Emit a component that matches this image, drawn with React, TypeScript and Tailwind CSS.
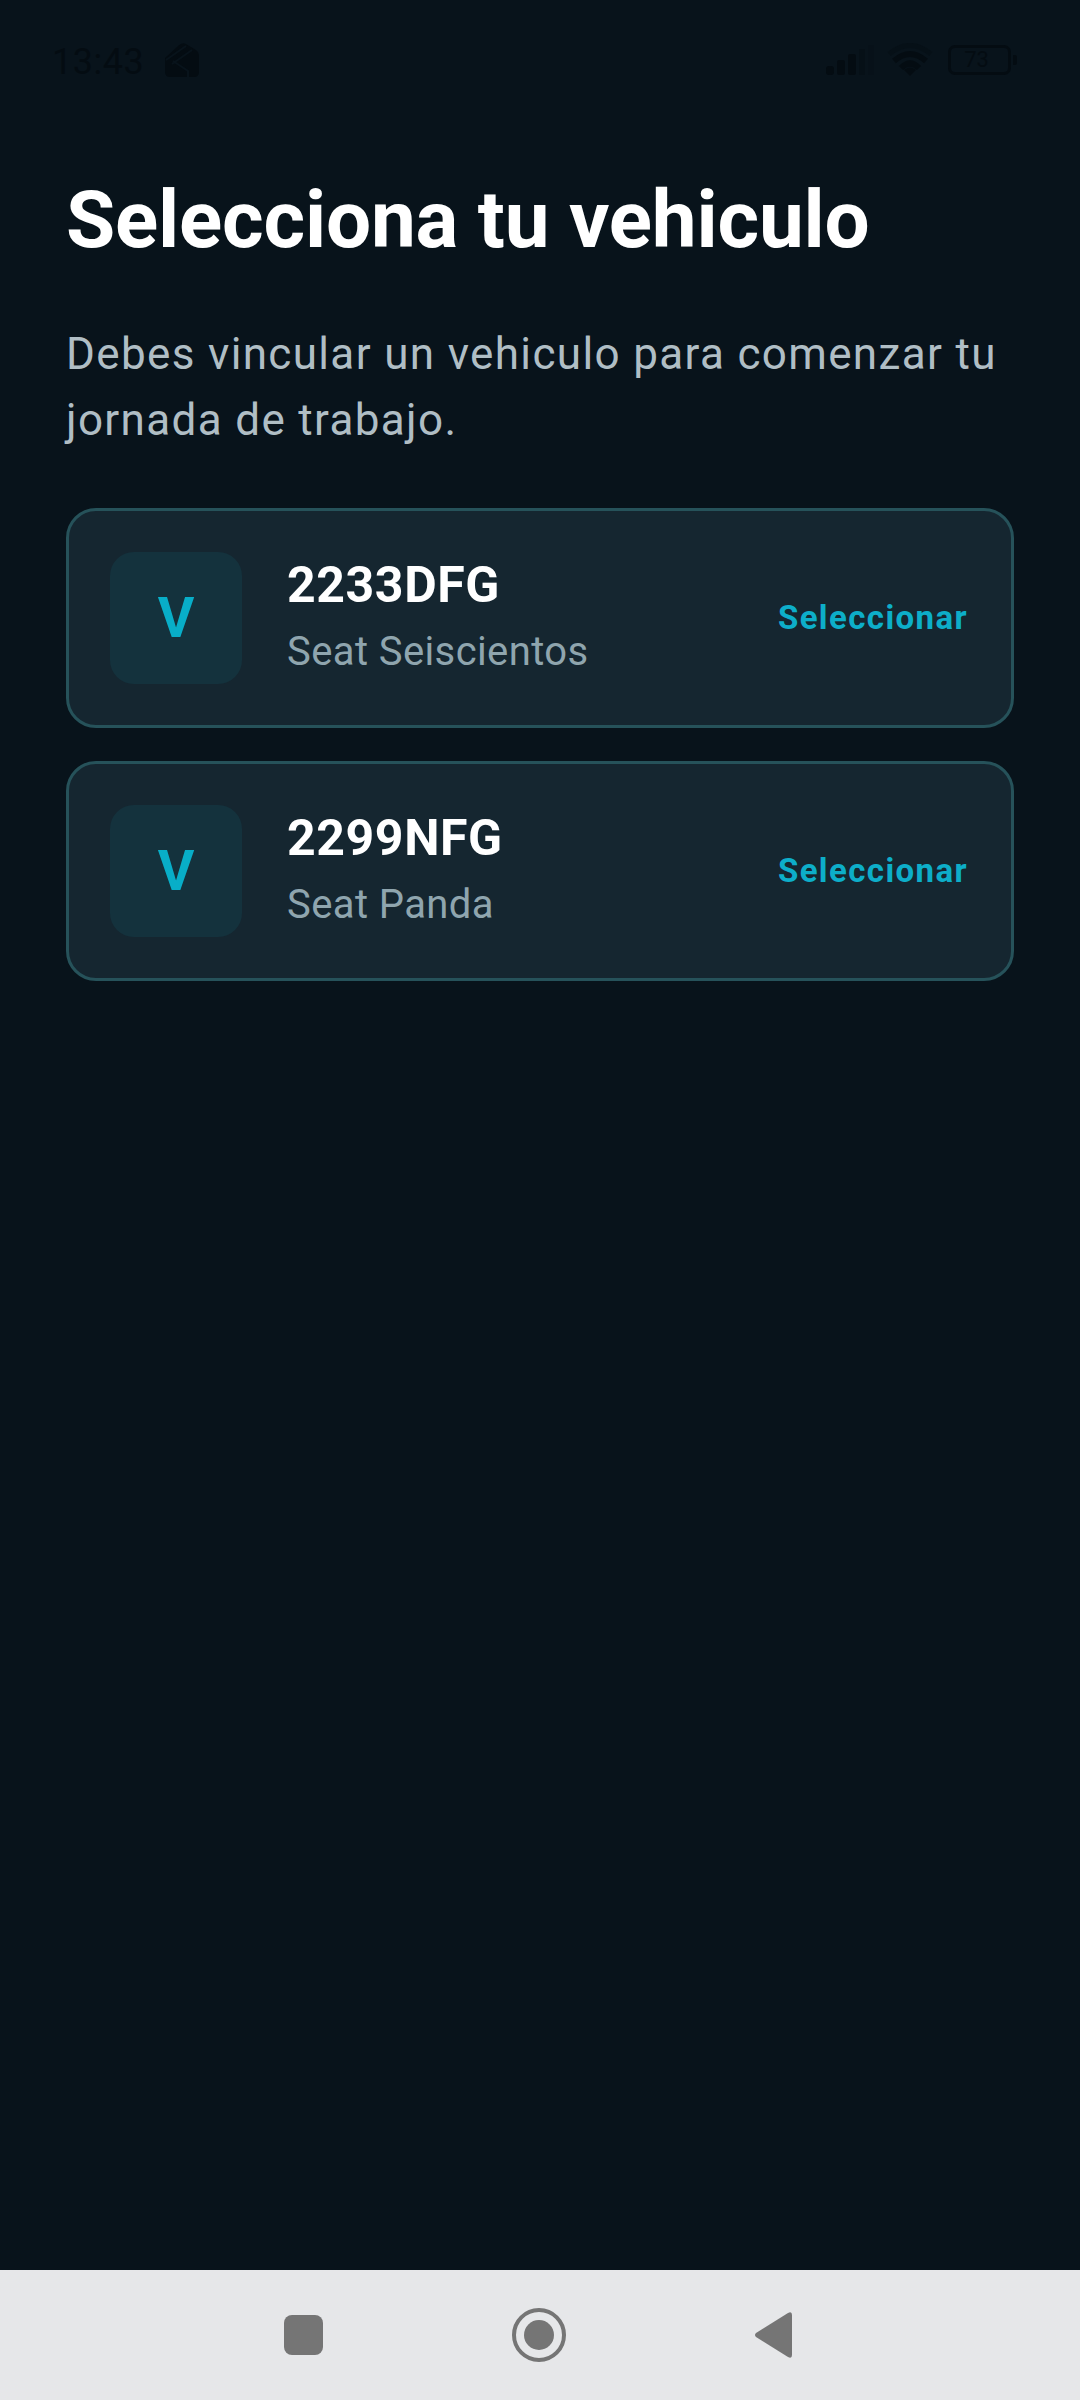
const vehicles = [
  { plate: "2233DFG", model: "Seat Seiscientos" },
  { plate: "2299NFG", model: "Seat Panda" },
];

function StatusBar() {
  return (
    <div className="flex h-[120px] shrink-0 items-center pl-[52px] pr-[69px] text-[#040c12]">
      <span className="mt-[3px] text-[36px] leading-none tracking-[0.5px]">13:43</span>
      <svg className="ml-[21px] h-[34px] w-[34px]" viewBox="0 0 34 34" fill="none">
        <path d="M0 15 L13 3 Q17 -1 21 1 L31 7 Q34 9 34 12 V29 Q34 34 29 34 H5 Q0 34 0 29 Z" fill="currentColor" />
        <path d="M1 17 L21 3 M7 21 L27 7 M8 18 L23 28 L23 34" stroke="#08131b" strokeWidth="2" />
      </svg>
      <div className="ml-auto flex items-center">
        <svg className="h-[30px] w-[48px]" viewBox="0 0 48 30" fill="currentColor">
          <rect x="0" y="21" width="8" height="9" rx="3" />
          <rect x="11" y="15" width="8" height="15" rx="2" />
          <rect x="22" y="9" width="8" height="21" rx="2" />
          <rect x="33" y="4" width="6" height="26" opacity="0.4" />
          <rect x="42" y="0" width="6" height="30" opacity="0.25" />
        </svg>
        <svg className="ml-[13px] h-[34px] w-[46px]" viewBox="0 0 46 34" fill="none" stroke="currentColor">
          <path d="M2 11 Q23 -6 44 11" strokeWidth="5" opacity="0.4" />
          <path d="M7 18 Q23 4 39 18" strokeWidth="6" />
          <path d="M14 25 Q23 16 32 25" strokeWidth="6" />
          <path d="M17 27 L23 33 L29 27 Q23 22 17 27 Z" fill="currentColor" stroke="none" />
        </svg>
        <div className="relative ml-[15px] flex h-[30px] w-[63px] items-center justify-center rounded-[7px] border-[3px] border-current pr-[6px]">
          <span className="text-[22px] leading-none">73</span>
          <div className="absolute -right-[9px] top-[7px] h-[10px] w-[4px] rounded-r-[2px] bg-current" />
        </div>
      </div>
    </div>
  );
}

function VehicleCard({ plate, model }: { plate: string; model: string }) {
  return (
    <div className="flex h-[220px] items-center rounded-[30px] border-[3px] border-[#26525a] bg-[#152630] pl-[41px] pr-[43px]">
      <div className="flex h-[132px] w-[132px] shrink-0 items-center justify-center rounded-[24px] bg-[#14323d] text-[56px] font-bold text-[#08aec8]">
        V
      </div>
      <div className="ml-[45px] flex flex-col pb-[2px]">
        <span className="text-[50px] font-bold leading-[58px] tracking-[0.6px] text-white">{plate}</span>
        <span className="mt-[12px] text-[40px] leading-[52px] tracking-[0.4px] text-[#8fa5ae]">{model}</span>
      </div>
      <span className="ml-auto text-[33px] font-bold tracking-[1.4px] text-[#0daec9]">Seleccionar</span>
    </div>
  );
}

function NavBar() {
  return (
    <div className="flex h-[130px] shrink-0 items-center gap-[189px] bg-[#e6e7e9] pl-[284px] text-[#757575]">
      <div className="h-[40px] w-[39px] rounded-[8px] bg-current" />
      <svg className="h-[54px] w-[54px]" viewBox="0 0 54 54">
        <circle cx="27" cy="27" r="25" fill="none" stroke="currentColor" strokeWidth="4" />
        <circle cx="27" cy="27" r="15" fill="currentColor" />
      </svg>
      <svg className="h-[46px] w-[37px]" viewBox="0 0 37 46" fill="currentColor">
        <path d="M1 21 L33 1 Q37 -1 37 3 V43 Q37 47 33 45 L1 25 Q-1 23 1 21 Z" />
      </svg>
    </div>
  );
}

export default function App() {
  return (
    <div className="flex h-[2400px] w-[1080px] flex-col bg-[#08131b] font-['Roboto',sans-serif]">
      <StatusBar />
      <main className="flex flex-1 flex-col px-[66px] pt-[56px]">
        <h1 className="text-[80px] font-bold leading-[88px] tracking-[-0.2px] text-white">Selecciona tu vehiculo</h1>
        <p className="mt-[57px] text-[44px] leading-[66px] tracking-[1.35px] text-[#b0bec5]">
          Debes vincular un vehiculo para comenzar tu jornada de trabajo.
        </p>
        <div className="mt-[55px] flex flex-col gap-[33px]">
          {vehicles.map((v) => (
            <VehicleCard key={v.plate} plate={v.plate} model={v.model} />
          ))}
        </div>
      </main>
      <NavBar />
    </div>
  );
}
